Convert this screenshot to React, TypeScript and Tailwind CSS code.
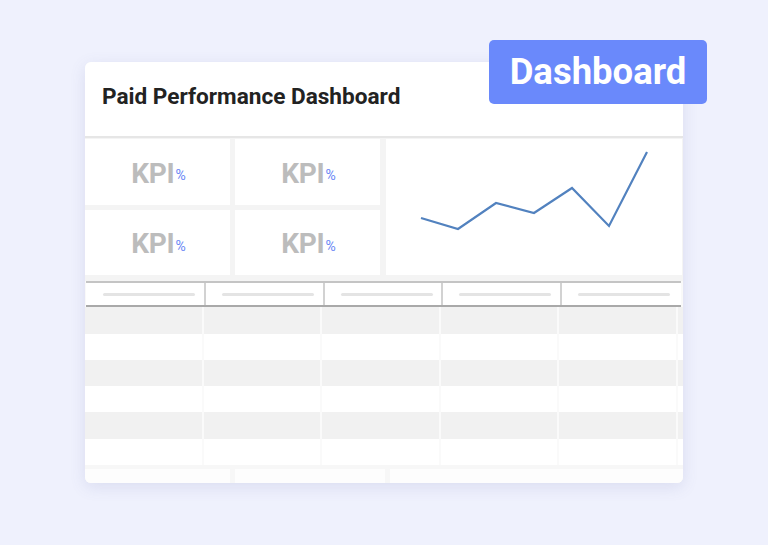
import React from "react";

const headerWidths = [118, 119, 118, 119, 119];
const cellWidths = [119, 118, 119, 118, 119];
const rows = [0, 1, 2, 3, 4, 5];

function KpiTile() {
  return (
    <div className="flex items-center justify-center bg-white pl-[2px] pt-[3px]">
      <span className="text-[28px] font-bold leading-none tracking-[-0.3px] text-[#bcbcbc]">KPI</span>
      <span className="ml-[1px] mt-[3px] text-[14px] leading-none text-[#6a86f5]">%</span>
    </div>
  );
}

function Chart() {
  return (
    <div className="bg-white">
      <svg width="297" height="136" viewBox="0 0 297 136">
        <polyline
          points="35,79 72,90 110,64 148,74 186,49 223,87 261,13"
          fill="none"
          stroke="#5282bf"
          strokeWidth="2.2"
          strokeLinejoin="miter"
        />
      </svg>
    </div>
  );
}

export default function App() {
  return (
    <div
      className="relative h-[545px] w-[768px] overflow-hidden bg-[#eff1fd] pl-[85px] pt-[62px]"
      style={{ fontFamily: "Roboto, 'Liberation Sans', sans-serif" }}
    >
      <div className="flex h-[421px] w-[598px] flex-col overflow-hidden rounded-[6px] bg-[#f4f4f4] shadow-[0_4px_16px_rgba(90,100,160,0.14)]">
        <div className="flex h-[78px] items-center border-b-2 border-[#e6e6e6] bg-white pb-[4px] pl-[17px]">
          <h1 className="text-[22.6px] font-bold text-[#222]">Paid Performance Dashboard</h1>
        </div>

        <div className="mt-[1px] grid h-[136px] grid-cols-[145px_145px_297px] grid-rows-[66px_65px] gap-x-[5px] gap-y-[5px]">
          <KpiTile />
          <KpiTile />
          <div className="row-span-2 ml-[1px]">
            <Chart />
          </div>
          <KpiTile />
          <KpiTile />
        </div>

        <div className="mt-[6px] flex flex-col bg-[#f9f9f9]">
          <div className="ml-[1px] flex h-[26px] w-[595px] border-y-2 border-t-[#c4c4c4] border-b-[#a9a9a9] bg-white">
            {headerWidths.map((w, i) => (
              <div
                key={i}
                className={`flex h-full shrink-0 items-center border-[#d2d2d2] ${i === 0 ? "pl-[17px]" : "border-l-2 pl-[16px]"}`}
                style={{ width: w }}
              >
                <div className="h-[3px] w-[92px] rounded-full bg-[#e4e4e4]" />
              </div>
            ))}
          </div>
          {rows.map((r) => (
            <div
              key={r}
              className={`flex h-[26.3px] ${r % 2 === 0 ? "bg-[#f1f1f1]" : "bg-white"}`}
            >
              {cellWidths.map((w, i) => (
                <div key={i} className="h-full shrink-0 border-r-2 border-[#fafafa]" style={{ width: w }} />
              ))}
            </div>
          ))}
          <div className="h-[4px] bg-[#f7f7f7]" />
          <div className="grid h-[14px] grid-cols-[145px_150px_1fr] gap-x-[5px] bg-[#f7f7f7]">
            <div className="bg-[#fdfdfd]" />
            <div className="bg-[#fdfdfd]" />
            <div className="bg-[#fdfdfd]" />
          </div>
        </div>
      </div>

      <div className="absolute left-[489px] top-[40px] flex h-[64px] w-[218px] items-center justify-center rounded-[5px] bg-[#6a89fb]">
        <span className="text-[36.5px] font-bold leading-none text-white">Dashboard</span>
      </div>
    </div>
  );
}
